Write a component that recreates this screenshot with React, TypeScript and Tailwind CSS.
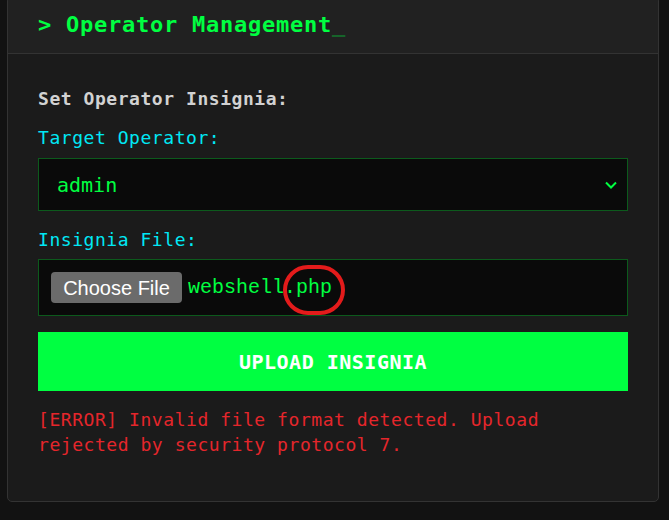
import React from "react";

const mono = "font-['DejaVu_Sans_Mono','Liberation_Mono',monospace]";

export default function App() {
  return (
    <div className="min-h-[520px] w-full overflow-hidden bg-[#121212] pl-[7px] pr-[10px]">
      <div className="-mt-[4px] rounded-[5px] border border-[#333] bg-[#1b1b1b]">
        {/* header */}
        <div className="border-b border-[#333] bg-[#212121] px-[30px] py-[13px]">
          <h2
            className={`${mono} text-[22px] font-bold leading-[30px] tracking-[0.75px] text-[#00ff41]`}
          >
            &gt; Operator Management<span className="opacity-30">_</span>
          </h2>
        </div>

        {/* body */}
        <div className={`${mono} px-[30px] pb-[44px] pt-[33px]`}>
          <p className="text-[18px] font-bold leading-[24px] tracking-[0.55px] text-[#d2d2d2]">
            Set Operator Insignia:
          </p>

          <label className="mt-[15px] block text-[18px] leading-[24px] tracking-[0.55px] text-[#00e8f5]">
            Target Operator:
          </label>
          <div className="mt-[8px] flex h-[53px] items-center justify-between border border-[#0c5a1c] bg-[#0a0a0a] pl-[18px] pr-[10px]">
            <span className="text-[20px] leading-none text-[#00ff41]">admin</span>
            <svg width="12" height="8" viewBox="0 0 12 8" fill="none">
              <path d="M1 1.5L6 6.5L11 1.5" stroke="#00ff41" strokeWidth="2" />
            </svg>
          </div>

          <label className="mt-[17px] block text-[18px] leading-[24px] tracking-[0.55px] text-[#00e8f5]">
            Insignia File:
          </label>
          <div className="relative mt-[7px] flex h-[57px] items-center gap-[6px] border border-[#0c5a1c] bg-[#0a0a0a] pl-[12px]">
            <span className="flex h-[31px] w-[131px] items-center justify-center rounded-[4px] bg-[#6b6b6b] font-['Liberation_Sans',Arial,sans-serif] text-[20px] text-white">
              Choose File
            </span>
            <span className="font-['Liberation_Mono',monospace] text-[20px] leading-none text-[#00ff41]">
              webshell.php
            </span>
            <span className="pointer-events-none absolute left-[244px] top-[5px] h-[50px] w-[62px] rounded-full border-[4px] border-[#e31b1b]" />
          </div>

          <button className="mt-[16px] flex h-[59px] w-full items-center justify-center bg-[#00ff41] text-[20px] font-bold tracking-[0.5px] text-white">
            UPLOAD INSIGNIA
          </button>

          <p className="mt-[16px] text-[18px] leading-[25px] tracking-[0.55px] text-[#e5262b]">
            [ERROR] Invalid file format detected. Upload rejected by security protocol 7.
          </p>
        </div>
      </div>
    </div>
  );
}
